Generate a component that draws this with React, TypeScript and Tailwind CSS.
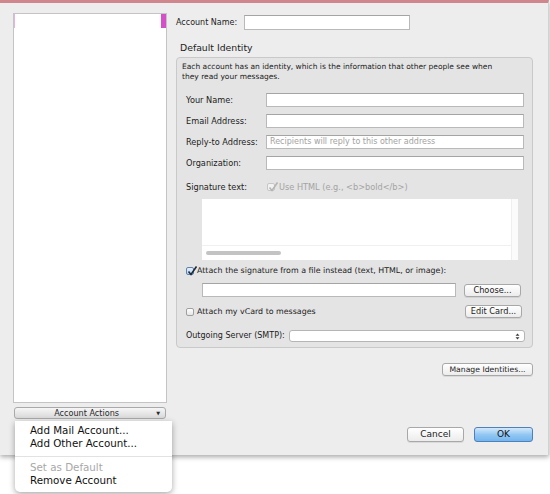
import React from 'react';

const font = "font-['DejaVu_Sans',sans-serif]";

function TextBox({ className = '', placeholder }: { className?: string; placeholder?: string }) {
  return (
    <div className={`flex h-[14px] items-center border border-[#b9b9b9] border-t-[#a4a4a4] bg-white px-[3px] ${className}`}>
      {placeholder ? <span className="text-[8px] leading-none text-[#a2a2a2]">{placeholder}</span> : null}
    </div>
  );
}

function Btn({ label, className = '' }: { label: string; className?: string }) {
  return (
    <div
      className={`flex items-center justify-center rounded-[3px] border border-[#a8a8a8] bg-gradient-to-b from-white to-[#ececec] text-[#1c1c1c] shadow-[0_1px_0_rgba(0,0,0,0.08)] ${className}`}
    >
      {label}
    </div>
  );
}

function Check({ checked, disabled }: { checked?: boolean; disabled?: boolean }) {
  return (
    <div
      className={`relative h-[8px] w-[8px] shrink-0 rounded-[2px] border ${
        disabled ? 'border-[#c6c6c6] bg-[#f2f2f2]' : checked ? 'border-[#5f82ad] bg-gradient-to-b from-[#e6f1fb] to-[#b4d2ef]' : 'border-[#9f9f9f] bg-gradient-to-b from-white to-[#e6e6e6]'
      }`}
    >
      {checked ? (
        <svg viewBox="0 0 10 10" className="absolute left-[0px] top-[-2px] h-[10px] w-[10px]">
          <path d="M1.5 5.5 L4 8.5 L9.5 0.5" fill="none" stroke={disabled ? '#b4b4b4' : '#1e2a3c'} strokeWidth="1.6" />
        </svg>
      ) : null}
    </div>
  );
}

function Row({ label, placeholder }: { label: string; placeholder?: string }) {
  return (
    <div className="flex h-[14px] items-center">
      <span className="w-[80px] whitespace-nowrap text-[8.2px] leading-none">{label}</span>
      <TextBox className="w-[258px]" placeholder={placeholder} />
    </div>
  );
}

export default function App() {
  return (
    <div className={`relative h-[494px] w-[550px] overflow-hidden bg-white text-[#1c1c1c] ${font}`}>
      <div className="flex h-[455px] w-[549px] border-t-[3px] border-r border-t-[#cf878d] border-r-[#d2d2d2] bg-[#ededed] shadow-[0_2px_5px_rgba(0,0,0,0.35)]">
        <div className="flex w-[176px] flex-col pl-[13px] pt-[10px]">
          <div className="relative h-[390px] w-[154px] border border-[#c4c4c4] bg-white">
            <div className="absolute right-0 top-0 h-[14px] w-[5px] bg-[#d54fcb]" />
            <div className="absolute left-0 top-0 h-[14px] w-px bg-[#eab1e4]" />
          </div>
          <div className="ml-[1px] mt-[4px] flex h-[12px] w-[152px] items-center rounded-[3px] border border-[#a9a9a9] bg-gradient-to-b from-[#f6f6f6] to-[#d9d9d9] text-[8.1px] leading-none text-[#2a2a2a]">
            <span className="flex-1 pl-[2px] text-center">Account Actions</span>
            <span className="pr-[5px] text-[5px]">▼</span>
          </div>
        </div>

        <div className="flex w-[357px] flex-col pt-[12px]">
          <div className="flex h-[15px] items-center">
            <span className="w-[68px] text-[8px] leading-none">Account Name:</span>
            <TextBox className="h-[15px] w-[166px]" />
          </div>

          <div className="mt-[12px] pl-[4px] text-[9.3px] leading-[12px]">Default Identity</div>

          <div className="mt-[3px] flex h-[291px] flex-col rounded-[4px] border border-[#c9c9c9] bg-[#e4e4e4] pl-[9px] pr-[7px]">
            <p className="-ml-[4px] mt-[4px] whitespace-nowrap text-[7.5px] leading-[10px]">
              Each account has an identity, which is the information that other people see when
              <br />
              they read your messages.
            </p>

            <div className="mt-[11px] flex flex-col gap-[7px]">
              <Row label="Your Name:" />
              <Row label="Email Address:" />
              <Row label="Reply-to Address:" placeholder="Recipients will reply to this other address" />
              <Row label="Organization:" />
            </div>

            <div className="mt-[11px] flex h-[12px] items-center">
              <span className="w-[81px] text-[8.2px] leading-none">Signature text:</span>
              <Check checked disabled />
              <span className="ml-[4px] whitespace-nowrap text-[8.2px] leading-none text-[#a3a3a3]">Use HTML (e.g., &lt;b&gt;bold&lt;/b&gt;)</span>
            </div>

            <div className="ml-[16px] mt-[6px] flex h-[61px] w-[316px] bg-white">
              <div className="flex flex-1 flex-col">
                <div className="h-[47px] border-b border-[#f0f0f0]" />
                <div className="flex flex-1 items-center pl-[4px]">
                  <div className="h-[4px] w-[75px] rounded-full bg-[#c3c3c3]" />
                </div>
              </div>
              <div className="w-[7px] border-l border-[#efefef] bg-[#fbfbfb]" />
            </div>

            <div className="mt-[5px] flex h-[12px] items-center">
              <Check checked />
              <span className="ml-[3px] whitespace-nowrap text-[7.9px] leading-none">Attach the signature from a file instead (text, HTML, or image):</span>
            </div>

            <div className="ml-[16px] mt-[6px] flex items-center">
              <TextBox className="w-[254px]" />
              <Btn label="Choose..." className="ml-[8px] h-[13px] w-[57px] text-[8.2px] leading-none" />
            </div>

            <div className="mt-[8px] flex h-[13px] items-center">
              <Check />
              <span className="ml-[3px] flex-1 text-[7.9px] leading-none">Attach my vCard to messages</span>
              <Btn label="Edit Card..." className="mr-[3px] h-[13px] w-[57px] text-[8.2px] leading-none" />
            </div>

            <div className="mt-[12px] flex h-[12px] items-center">
              <span className="w-[103px] whitespace-nowrap text-[8px] leading-none">Outgoing Server (SMTP):</span>
              <div className="flex h-[12px] w-[236px] items-center justify-end rounded-[3px] border border-[#b5b5b5] bg-white pr-[4px]">
                <svg viewBox="0 0 6 9" className="h-[7px] w-[5px]">
                  <path d="M3 0.5 L5.5 3.5 H0.5 Z M3 8.5 L5.5 5.5 H0.5 Z" fill="#3a3a3a" />
                </svg>
              </div>
            </div>
          </div>

          <div className="mt-[15px] flex justify-end">
            <Btn label="Manage Identities..." className="h-[13px] w-[91px] text-[7.7px] leading-none" />
          </div>

          <div className="mt-[51px] flex justify-end gap-[10px]">
            <Btn label="Cancel" className="h-[15px] w-[57px] text-[9px] leading-none" />
            <div className="flex h-[15px] w-[59px] items-center justify-center rounded-[3px] border border-[#4f80b8] bg-gradient-to-b from-[#d3e9fc] via-[#94c8f3] to-[#72b5ee] text-[9px] leading-none text-[#111]">
              OK
            </div>
          </div>
        </div>
      </div>

      <div className="absolute left-[15px] top-[421px] w-[157px] rounded-b-[5px] bg-white pb-[5px] pt-[3px] text-[10.3px] text-[#111] shadow-[0_2px_6px_rgba(0,0,0,0.35)]">
        <div className="h-[13px] pl-[15px] leading-[13px]">Add Mail Account...</div>
        <div className="h-[13px] pl-[15px] leading-[13px]">Add Other Account...</div>
        <div className="mb-[4px] mt-[6px] h-px bg-[#e2e2e2]" />
        <div className="h-[13px] pl-[15px] leading-[13px] text-[#a8a8a8]">Set as Default</div>
        <div className="h-[13px] pl-[15px] leading-[13px]">Remove Account</div>
      </div>
    </div>
  );
}
